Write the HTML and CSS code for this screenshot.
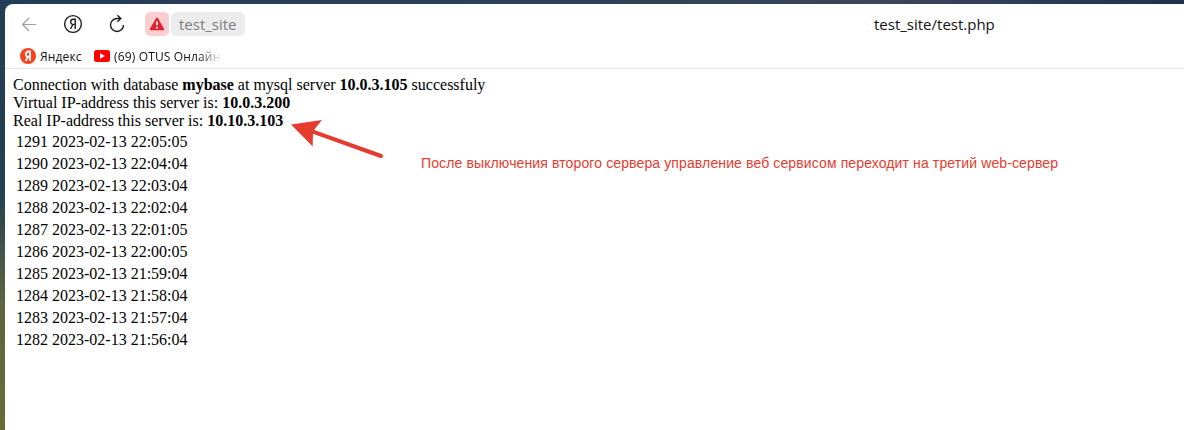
FILE: index.html
```
<!DOCTYPE html>
<html lang="ru">
<head>
<meta charset="utf-8">
<title>test_site/test.php</title>
<link rel="stylesheet" href="styles.css">
</head>
<body>
<div class="window">
  <header class="toolbar">
    <svg class="nav back" width="16" height="16" viewBox="0 0 16 16"><path d="M15 8.5H1.5M8 2L1.5 8.5L8 15"/></svg>
    <svg class="nav ya" width="20" height="20" viewBox="0 0 20 20"><circle cx="10" cy="10" r="8.4"/><path d="M12.2 15V5.2H10.3C7 5.2 6.8 10.4 10 10.4H12.2M10 10.4L7.4 15"/></svg>
    <svg class="nav reload" width="18" height="18" viewBox="0 0 18 18"><path d="M12.8 3.5H9A6.5 6.5 0 1 0 15.5 10M9.4 .3L12.8 3.5L9.4 6.7"/></svg>
    <div class="address">
      <span class="warn"><svg width="16" height="14" viewBox="0 0 16 14"><path class="tri" d="M8 1.5L14.2 12.3H1.8Z"/><path class="mark" d="M8 4.6V8.2M8 9.8V11.4"/></svg></span>
      <span class="host"><span>test_site</span></span>
    </div>
    <div class="title"><span>test_site/test.php</span></div>
  </header>
  <nav class="bookmarks">
    <svg class="ylogo" width="16" height="16" viewBox="0 0 16 16"><circle cx="8" cy="8" r="8"/><path d="M10 13V3.5H8.6C5 3.5 4.9 8.8 8.2 8.8H10M8 8.8L5.6 13"/></svg>
    <span class="bm first">Яндекс</span>
    <svg class="yt" width="16" height="12" viewBox="0 0 16 12"><rect width="16" height="12" rx="2.5"/><path d="M6 3.3V8.7L11 6Z"/></svg>
    <span class="bm fade">(69) OTUS Онлайн</span>
  </nav>
  <main class="page">
    <div>Connection with database <b>mybase</b> at mysql server <b>10.0.3.105</b> successfuly</div>
    <div>Virtual IP-address this server is: <b>10.0.3.200</b></div>
    <div>Real IP-address this server is: <b>10.10.3.103</b></div>
    <table class="log">
      <tr><td>1291 2023-02-13 22:05:05</td></tr>
      <tr><td>1290 2023-02-13 22:04:04</td></tr>
      <tr><td>1289 2023-02-13 22:03:04</td></tr>
      <tr><td>1288 2023-02-13 22:02:04</td></tr>
      <tr><td>1287 2023-02-13 22:01:05</td></tr>
      <tr><td>1286 2023-02-13 22:00:05</td></tr>
      <tr><td>1285 2023-02-13 21:59:04</td></tr>
      <tr><td>1284 2023-02-13 21:58:04</td></tr>
      <tr><td>1283 2023-02-13 21:57:04</td></tr>
      <tr><td>1282 2023-02-13 21:56:04</td></tr>
    </table>
  </main>
</div>
<svg class="arrow" width="96" height="42" viewBox="0 0 96 42"><path class="head" d="M1 4.5L32 0L23 11L22.7 26.5Z"/><path class="shaft" d="M20 10.6L91 36"/></svg>
<div class="note">После выключения второго сервера управление веб сервисом переходит на третий web-сервер</div>
</body>
</html>
```
FILE: styles.css
```
* { box-sizing: border-box; }
body {
  margin: 0;
  height: 430px;
  overflow: hidden;
  position: relative;
  padding: 4px 0 0 5px;
  background:
    linear-gradient(90deg, #233d57, #2b3f57 40%, #3c455b 75%, #20304f) 0 0 / 100% 4px no-repeat,
    linear-gradient(#233d57, #263f52 45%, #5c6440 70%, #686d35);
}
svg { display: block; flex: none; }
.window {
  height: 426px;
  background: #fff;
  border-top-left-radius: 8px;
  display: flex;
  flex-direction: column;
}
.toolbar {
  height: 40px;
  flex: none;
  display: flex;
  align-items: center;
  padding-left: 16px;
  font: 16px "Open Sans", "Noto Sans", sans-serif;
}
.nav { fill: none; stroke: #1c1c1c; stroke-width: 1.4; }
.back { stroke: #a0a0a0; stroke-width: 1.2; }
.ya { margin-left: 26px; }
.reload { margin-left: 25px; }
.address { display: flex; gap: 2px; margin-left: 19px; }
.warn {
  width: 24px;
  height: 24px;
  border-radius: 5px;
  background: #facfd2;
  display: flex;
  align-items: center;
  justify-content: center;
}
.tri { fill: #e3212c; stroke: #e3212c; stroke-width: 2; stroke-linejoin: round; }
.mark { stroke: #fff; stroke-width: 1.7; }
.host {
  width: 74px;
  height: 24px;
  line-height: 24px;
  padding-left: 8px;
  border-radius: 6px;
  background: #ececec;
  color: #7c7c7c;
  font-size: 15px;
  white-space: nowrap;
}
.title { margin-left: 629px; color: #111; font-size: 15px; white-space: nowrap; }
.bookmarks {
  height: 25px;
  flex: none;
  border-bottom: 1px solid #e2e2e2;
  display: flex;
  align-items: center;
  padding-left: 15px;
  font: 12px "Open Sans", "Noto Sans", sans-serif;
  color: #111;
}
.ylogo circle { fill: #fc3f1d; }
.ylogo path { fill: none; stroke: #fff; stroke-width: 1.9; }
.yt rect { fill: #f00; }
.yt path { fill: #fff; }
.bm { white-space: nowrap; margin-left: 4px; }
.first { width: 54px; letter-spacing: .15px; }
.fade {
  width: 108px;
  overflow: hidden;
  letter-spacing: .15px;
  -webkit-mask-image: linear-gradient(90deg, #000 78%, transparent);
  mask-image: linear-gradient(90deg, #000 78%, transparent);
}
.page { padding: 7px 8px 0; font: 16px/18px "Liberation Serif", serif; color: #000; }
.log { border-spacing: 2px; font: inherit; }
.log td { padding: 1px; }
.arrow { position: absolute; left: 290px; top: 120px; }
.head { fill: #e63b2f; }
.shaft { stroke: #e63b2f; stroke-width: 4; stroke-linecap: round; }
.note {
  position: absolute;
  left: 421px;
  top: 154px;
  font: 14px/18px "Liberation Sans", sans-serif;
  letter-spacing: .12px;
  color: #e63b2f;
  white-space: nowrap;
}
```
